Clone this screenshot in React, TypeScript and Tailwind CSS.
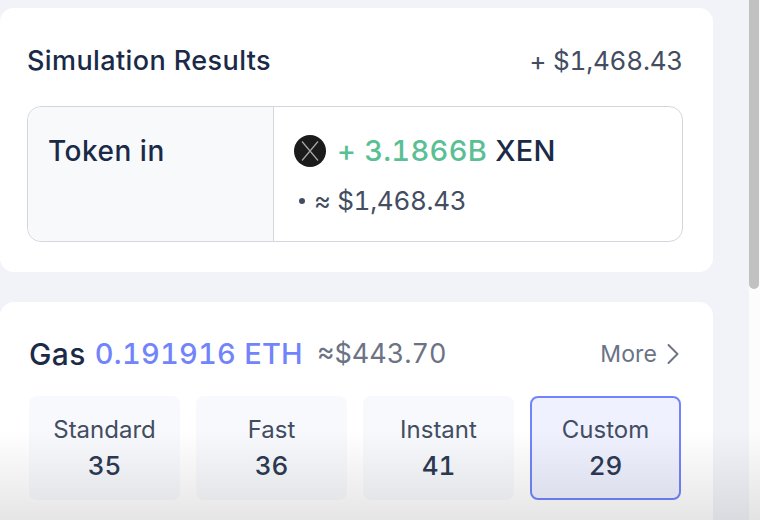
import React from 'react';
import { ChevronRight } from 'lucide-react';

const gasOptions = [
    { label: 'Standard', value: 35 },
    { label: 'Fast', value: 36 },
    { label: 'Instant', value: 41 },
    { label: 'Custom', value: 29, active: true },
];

const App: React.FC = () => {
    return (
        <div className="relative flex h-[520px] w-[760px] overflow-hidden bg-[#f1f3f8] font-['Inter',sans-serif] tabular-nums antialiased">
            <main className="flex w-[749px] flex-col gap-[30px] pt-2 pr-9">
                {/* Simulation results */}
                <section className="h-[264px] rounded-[14px] bg-white pt-[34px] pr-[30px] pl-[27px]">
                    <div className="flex h-[38px] items-center justify-between">
                        <h2 className="text-[27px] leading-[38px] font-medium tracking-[0.4px] text-[#1a2a47]">Simulation Results</h2>
                        <span className="text-[26px] leading-[38px] tracking-[-0.2px] text-[#434d62]">+ $1,468.43</span>
                    </div>
                    <div className="mt-[26px] flex h-[136px] rounded-[14px] border border-[#d4d6de]">
                        <div className="w-[246px] rounded-l-[14px] border-r border-[#d4d6de] bg-[#f8f9fb] pt-[23px] pl-5">
                            <span className="text-[28px] leading-[42px] font-medium tracking-[0.5px] text-[#1a2a47]">Token in</span>
                        </div>
                        <div className="flex-1 pt-[23px] pl-5">
                            <div className="flex h-[42px] items-center gap-[11px]">
                                <svg width="32" height="32" viewBox="0 0 32 32" aria-hidden="true">
                                    <circle cx="16" cy="16" r="16" fill="#1b1b1b" />
                                    <path d="M8 6.5 L24 25.5 M24 6.5 L8 25.5" stroke="#a8a8a8" strokeWidth="1.2" fill="none" />
                                </svg>
                                <span className="text-[29px] leading-[42px] font-medium tracking-[0.3px] text-[#5abf94]">
                                    + 3.1866B <span className="text-[#1a2a47]">XEN</span>
                                </span>
                            </div>
                            <div className="mt-[10px] flex h-[38px] items-center pl-[5px] text-[26px] leading-[38px] tracking-[-0.3px] text-[#434d62]">
                                <span className="mr-[9px] h-[6px] w-[6px] rounded-full bg-[#434d62]" />
                                ≈ $1,468.43
                            </div>
                        </div>
                    </div>
                </section>

                {/* Gas */}
                <section className="flex-1 rounded-t-[14px] bg-white pt-[32px] pr-[32px] pl-[29px]">
                    <div className="flex h-10 items-center justify-between">
                        <div className="flex items-center text-[29px] leading-10">
                            <span className="text-[30px] font-medium tracking-[0.4px] text-[#1a2a47]">Gas</span>
                            <span className="ml-[9px] font-medium tracking-[0.25px] text-[#7284fb]">0.191916 ETH</span>
                            <span className="ml-[14px] text-[27px] text-[#6b7385]">≈$443.70</span>
                        </div>
                        <div className="flex items-center text-[23px] tracking-[0.1px] text-[#6b7385]">
                            More
                            <ChevronRight size={36} strokeWidth={1.3} className="-mr-[10px] -ml-[2px]" />
                        </div>
                    </div>
                    <div className="mt-[22px] grid grid-cols-4 gap-4">
                        {gasOptions.map((item) => (
                            <div
                                key={item.label}
                                className={
                                    item.active
                                        ? 'flex h-[104px] flex-col items-center justify-center rounded-lg border-2 border-[#7284fb] bg-[#eff1ff]'
                                        : 'flex h-[104px] flex-col items-center justify-center rounded-lg bg-[#f8f9fc]'
                                }
                            >
                                <span className="text-[24px] leading-9 text-[#434d62]">{item.label}</span>
                                <span className="text-[26px] leading-9 font-medium text-[#2d3a55]">{item.value}</span>
                            </div>
                        ))}
                    </div>
                </section>
            </main>

            {/* Scrollbar */}
            <div className="w-[11px] bg-[#fcfcfc]">
                <div className="h-[289px] w-[10px] rounded-b-[5px] bg-[#c1c1c1]" />
            </div>

            {/* Bottom fade */}
            <div className="pointer-events-none absolute inset-x-0 bottom-0 h-[90px] bg-gradient-to-b from-transparent to-black/10" />
        </div>
    );
};

export default App;
